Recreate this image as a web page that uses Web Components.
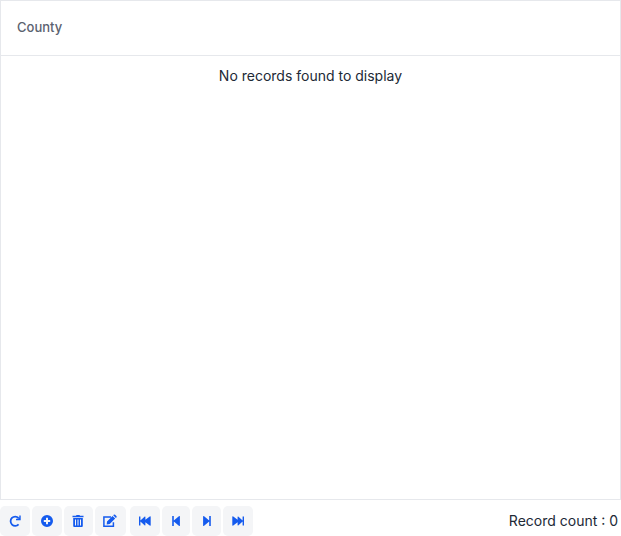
<!DOCTYPE html>
<html lang="en">
<head>
<meta charset="utf-8">
<title>County records</title>
<style>
html,body{height:100%}
body{margin:0;background:#fff;color:#212936;font:14px/20px Inter,"Liberation Sans",sans-serif;overflow:hidden}
</style>
</head>
<body>
<record-view></record-view>
<script>
const icons = {
  refresh: '<path d="M11.600 10.300A4.600 4.600 0 1 1 11.500 4" fill="none" stroke="currentColor" stroke-width="1.800"/><path d="M13.700 1.500v4.700H9V4.800h1.900L12.300 3.400V1.500z"/>',
  add: '<path fill-rule="evenodd" d="M8 1a6 6 0 1 0 0 12A6 6 0 0 0 8 1zM7 3.800h2V6h2.200v2H9v2.200H7V8H4.800V6H7z"/>',
  remove: '<path fill-rule="evenodd" d="M2.500 1.800H6L6.500 1h3l.5.800h3.500v1.500h-11zM3.200 4h9.600V12q0 1-1 1H4.200q-1 0-1-1zM5 5.400v6.200h1V5.400zm2.500 0v6.200h1V5.400zm2.500 0v6.200h1V5.400z"/>',
  edit: '<path d="M9 2.900H1.900V12.200h9.500V8.300" fill="none" stroke="currentColor" stroke-width="1.500"/><path d="M5 7.400l5.500-5.500 2.700 2.700-5.500 5.500-3 .4zM11.200 1.300l.5-.5q.7-.6 1.400 0l1.300 1.300q.6.700 0 1.400l-.5.500z"/>',
  first: '<path d="M2 2.500h1.400v4L7.800 2.600q.6-.4.600.3v2.900l4.300-3.200q1-.7 1 .4v8q0 1.100-1 .4L8.400 8.200v2.900q0 .7-.6.300L3.400 7.500v4H2z"/>',
  prev: '<path d="M4.200 2h1.600v4.400L10.900 2.200q1-.7 1 .4v8.800q0 1.100-1 .4L5.800 7.600V12H4.200z"/>',
  next: '<path d="M11.800 2h-1.600v4.400L5.100 2.200q-1-.7-1 .4v8.800q0 1.100 1 .4l5.100-4.200V12h1.600z"/>',
  last: '<path d="M14 2.500h-1.400v4L8.200 2.600q-.6-.4-.6.300v2.900L3.300 2.600q-1-.7-1 .4v8q0 1.100 1 .4l4.300-3.200v2.900q0 .7.600.3l4.400-3.900v4H14z"/>'
};

class IconButton extends HTMLElement {
  connectedCallback() {
    const name = this.getAttribute('icon');
    this.attachShadow({mode:'open'}).innerHTML = `
      <style>
        :host{display:block;height:30px}
        button{display:flex;align-items:center;justify-content:center;width:100%;height:30px;padding:0;border:0;border-radius:5px;background:#f4f5f7;color:#155bee}
        svg{display:block;flex:none;fill:currentColor;overflow:visible}
        :host([icon="remove"]) button,:host([icon="edit"]) button{padding-right:1px}
      </style>
      <button aria-label="${name}"><svg width="16" height="14" viewBox="0 0 16 14">${icons[name]}</svg></button>`;
  }
}
customElements.define('icon-button', IconButton);

class DataGrid extends HTMLElement {
  connectedCallback() {
    this.attachShadow({mode:'open'}).innerHTML = `
      <style>
        :host{display:flex;flex-direction:column;box-sizing:border-box;border:1px solid #e6e8ec}
        header{box-sizing:border-box;height:55px;padding:16px 16px 18px;border-bottom:1px solid #e6e8ec;color:#5b6270;font-size:13px;font-weight:500}
        main{flex:1;padding-top:10px;text-align:center}
      </style>
      <header><slot name="heading"></slot></header>
      <main><slot></slot></main>`;
  }
}
customElements.define('data-grid', DataGrid);

class RecordToolbar extends HTMLElement {
  connectedCallback() {
    this.attachShadow({mode:'open'}).innerHTML = `
      <style>
        :host{display:flex;justify-content:space-between;height:30px}
        nav{display:grid;grid-template-columns:30px 30px 29px 31px;gap:2px}
        nav + nav{grid-template-columns:30px 28px 29px 30px;margin-left:4px}
        .buttons{display:flex}
        .count{padding:5px 3px 0 0;white-space:nowrap}
      </style>
      <div class="buttons">
        <nav><icon-button icon="refresh"></icon-button><icon-button icon="add"></icon-button><icon-button icon="remove"></icon-button><icon-button icon="edit"></icon-button></nav>
        <nav><icon-button icon="first"></icon-button><icon-button icon="prev"></icon-button><icon-button icon="next"></icon-button><icon-button icon="last"></icon-button></nav>
      </div>
      <div class="count"><slot></slot></div>`;
  }
}
customElements.define('record-toolbar', RecordToolbar);

class RecordView extends HTMLElement {
  connectedCallback() {
    this.attachShadow({mode:'open'}).innerHTML = `
      <style>
        :host{display:grid;grid-template-rows:500px 30px;row-gap:6px;height:536px}
      </style>
      <data-grid><span slot="heading">County</span>No records found to display</data-grid>
      <record-toolbar>Record count : 0</record-toolbar>`;
  }
}
customElements.define('record-view', RecordView);
</script>
</body>
</html>
